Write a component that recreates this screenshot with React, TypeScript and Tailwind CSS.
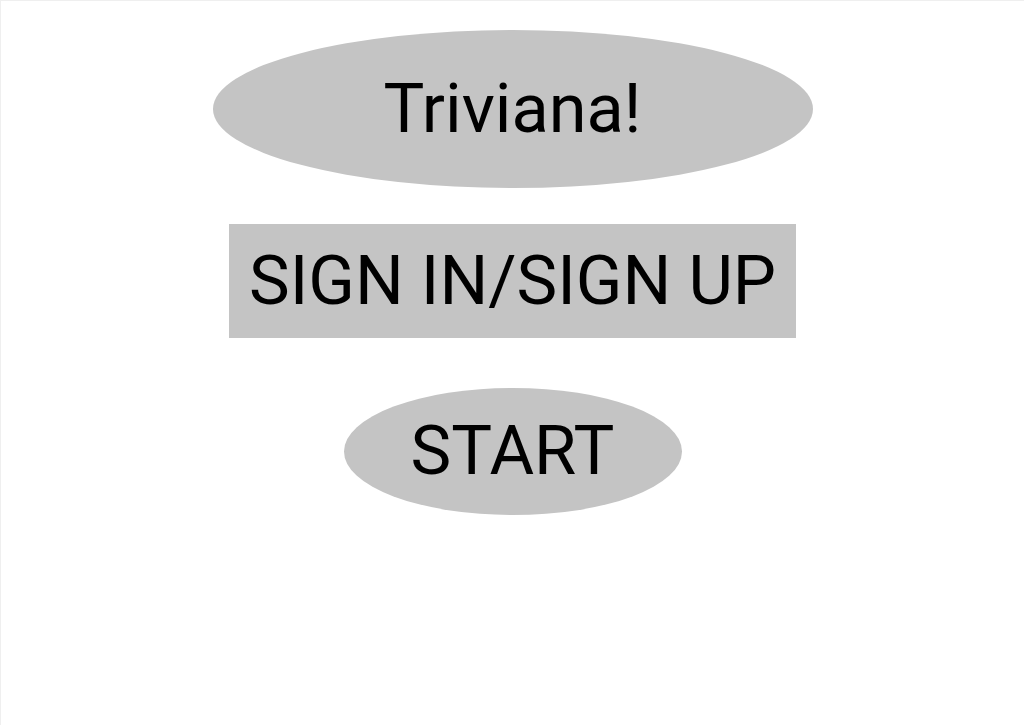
export default function App() {
  return (
    <div
      className="w-[1024px] h-[725px] bg-white border-t border-l border-[#efefef] flex flex-col items-center text-black"
      style={{ fontFamily: 'Roboto, "Liberation Sans", sans-serif' }}
    >
      <div className="mt-[29px] w-[600px] h-[158px] rounded-[50%] bg-[#c4c4c4] flex items-center justify-center">
        <h1 className="text-[68.5px] leading-none font-normal">Triviana!</h1>
      </div>

      <button className="mt-[36px] w-[567px] h-[114px] bg-[#c4c4c4] flex items-center justify-center text-[68.5px] leading-none">
        SIGN IN/SIGN UP
      </button>

      <button className="mt-[50px] w-[338px] h-[127px] rounded-[50%] bg-[#c4c4c4] flex items-center justify-center text-[68.5px] leading-none">
        START
      </button>
    </div>
  );
}
